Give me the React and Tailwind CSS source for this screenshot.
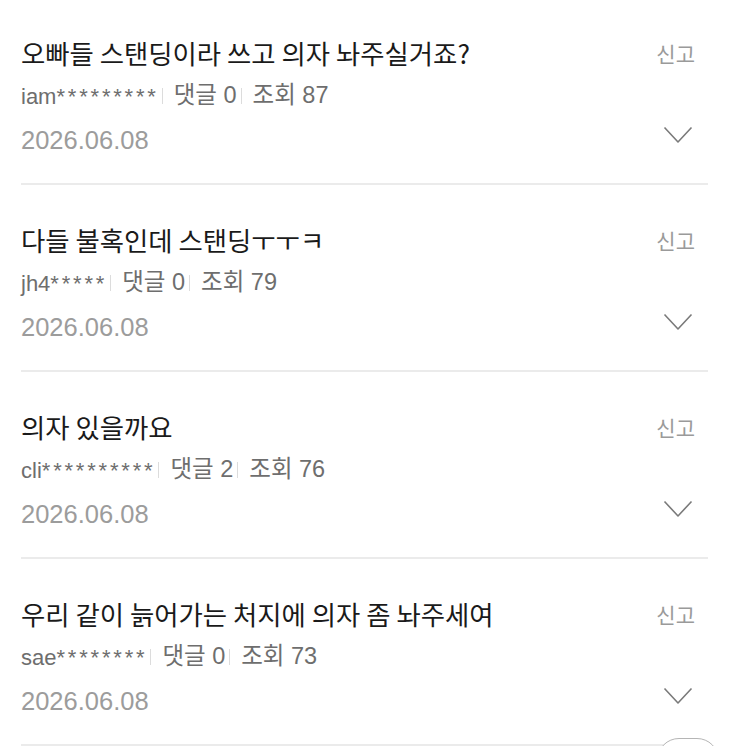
import React from 'react'

const posts = [
  { title: '오빠들 스탠딩이라 쓰고 의자 놔주실거죠?', user: 'iam', stars: 9, comments: 0, views: 87, date: '2026.06.08' },
  { title: '다들 불혹인데 스탠딩ㅜㅜㅋ', user: 'jh4', stars: 5, comments: 0, views: 79, date: '2026.06.08' },
  { title: '의자 있을까요', user: 'cli', stars: 10, comments: 2, views: 76, date: '2026.06.08' },
  { title: '우리 같이 늙어가는 처지에 의자 좀 놔주세여', user: 'sae', stars: 8, comments: 0, views: 73, date: '2026.06.08' },
]

const font = { fontFamily: '"Liberation Sans", "Noto Sans CJK KR", sans-serif' }

function Sep() {
  return <span className="inline-block w-px h-[16px] bg-[#dcdcdc]" />
}

function Chevron() {
  return (
    <svg width="30" height="18" viewBox="0 0 30 18" fill="none" aria-hidden="true" className="-mt-[10px]">
      <path d="M1.5 1.5L15 16L28.5 1.5" stroke="#7a7a7a" strokeWidth="1.6" strokeLinejoin="round" />
    </svg>
  )
}

function PostItem({ post }) {
  return (
    <div className="pt-[39px]">
      <div className="flex items-center h-[32px]">
        <h2
          className="flex-1 text-[26.4px] leading-[32px] text-[#1a1a1a]"
          style={{ fontFamily: '"Noto Sans CJK KR", "Liberation Sans", sans-serif' }}
        >
          {post.title}
        </h2>
        <button
          type="button"
          className="mr-[13px] text-[21px] leading-[32px] text-[#9a9a9a]"
          style={{ fontFamily: '"Noto Sans CJK KR", sans-serif' }}
        >
          신고
        </button>
      </div>
      <div className="mt-[12px] flex items-center h-[30px] text-[22px] text-[#6e6e6e]" style={font}>
        <span>
          {post.user}
          <span className="tracking-[2.8px]">{'*'.repeat(post.stars)}</span>
        </span>
        <span className="ml-[3px] mr-[11px] flex items-center"><Sep /></span>
        <span className="text-[23.5px]">댓글 {post.comments}</span>
        <span className="ml-[4px] mr-[11px] flex items-center"><Sep /></span>
        <span className="text-[23.5px]">조회 {post.views}</span>
      </div>
      <div className="mt-[14px] flex items-center h-[30px]">
        <span className="flex-1 text-[25.5px] leading-[30px] text-[#9c9c9c]" style={font}>
          {post.date}
        </span>
        <span className="mr-[15px] flex items-center">
          <Chevron />
        </span>
      </div>
      <div className="mt-[28px] h-[2px] bg-[#ebebeb]" />
    </div>
  )
}

export default function App() {
  return (
    <div className="relative w-[736px] h-[746px] overflow-hidden bg-white">
      <div className="-mt-[2px] pl-[21px] pr-[28px]">
        {posts.map((p) => (
          <PostItem key={p.user} post={p} />
        ))}
      </div>
      {/* floating button, cut off by the bottom edge */}
      <button
        type="button"
        aria-label="맨 위로"
        className="absolute left-[657px] top-[738px] w-[62px] h-[44px] rounded-full border-[1.5px] border-[#b5b5b5] bg-white"
      />
    </div>
  )
}
